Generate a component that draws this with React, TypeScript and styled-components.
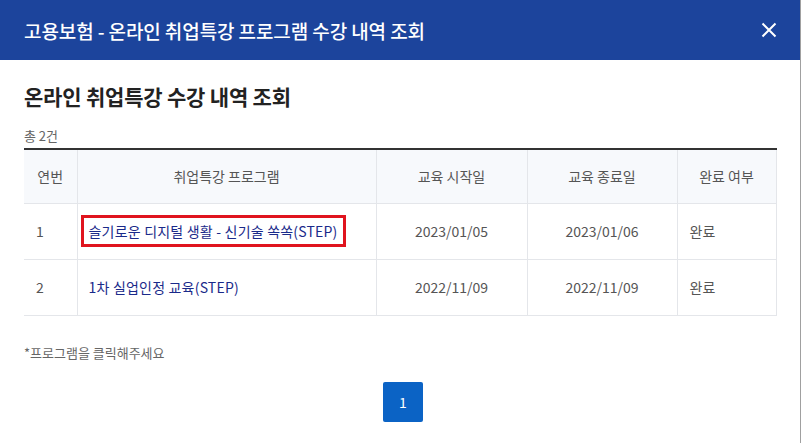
import React from "react";
import styled, { createGlobalStyle } from "styled-components";

const Global = createGlobalStyle`
  html, body { margin: 0; padding: 0; background: #fff; }
  body { font-family: "Noto Sans CJK KR", "Noto Sans", sans-serif; }
  * { box-sizing: border-box; }
`;

const Modal = styled.div`
  width: 801px;
  height: 443px;
  background: #fff;
  border-right: 1px solid #a0a0a0;
  overflow: hidden;
`;

const Header = styled.div`
  height: 60px;
  background: #1c449c;
  display: flex;
  align-items: center;
  justify-content: space-between;
  padding: 0 22px 0 24px;
`;

const HeaderTitle = styled.h1`
  margin: 0;
  color: #fff;
  font-size: 19px;
  font-weight: 500;
  letter-spacing: -0.1px;
`;

const CloseButton = styled.button`
  border: 0;
  background: transparent;
  padding: 0;
  width: 18px;
  height: 18px;
  display: flex;
  align-items: center;
  justify-content: center;
  cursor: pointer;
`;

const Body = styled.div`
  padding: 21px 24px 0 24px;
  width: 800px;
`;

const Heading = styled.h2`
  margin: 0;
  font-size: 21px;
  font-weight: 700;
  color: #222;
  line-height: 30px;
  letter-spacing: -0.2px;
`;

const Count = styled.div`
  margin-top: 16px;
  font-size: 13px;
  color: #666;
  line-height: 18px;
`;

const Table = styled.table`
  margin-top: 3px;
  width: 752px;
  border-collapse: collapse;
  border-top: 2px solid #333;
  table-layout: fixed;
  font-size: 14px;
  color: #555;
`;

const Th = styled.th<{ $w: number }>`
  width: ${(p) => p.$w}px;
  height: 54px;
  background: #f7f9fc;
  font-weight: 400;
  text-align: center;
  border: 1px solid #e4e6ea;
  border-top: 0;
  &:first-child { border-left: 0; }
`;

const Td = styled.td<{ $align?: "left" | "center" }>`
  height: 56px;
  border: 1px solid #e4e6ea;
  text-align: ${(p) => p.$align || "left"};
  padding: 0 12px;
  &:first-child { border-left: 0; }
`;

const ProgramCell = styled(Td)`
  padding: 0 0 0 3px;
`;

const ProgramLink = styled.a<{ $marked?: boolean }>`
  display: inline-block;
  color: #1a2a8a;
  text-decoration: none;
  letter-spacing: 0.2px;
  padding: ${(p) => (p.$marked ? "3px 5px" : "6px 8px")};
  border: ${(p) => (p.$marked ? "3px solid #e0141e" : "0")};
  cursor: pointer;
`;

const Note = styled.p`
  margin: 27px 0 0;
  font-size: 13px;
  color: #666;
`;

const Pagination = styled.div`
  display: flex;
  justify-content: center;
  margin-top: 20px;
  padding-left: 6px;
`;

const PageButton = styled.button`
  width: 40px;
  height: 40px;
  border: 0;
  border-radius: 2px;
  background: #0b63c5;
  color: #fff;
  font-size: 14px;
  font-family: inherit;
  cursor: pointer;
`;

const rows = [
  { no: 1, name: "슬기로운 디지털 생활 - 신기술 쏙쏙(STEP)", start: "2023/01/05", end: "2023/01/06", done: "완료", marked: true },
  { no: 2, name: "1차 실업인정 교육(STEP)", start: "2022/11/09", end: "2022/11/09", done: "완료", marked: false },
];

export default function App() {
  return (
    <Modal>
      <Global />
      <Header>
        <HeaderTitle>고용보험 - 온라인 취업특강 프로그램 수강 내역 조회</HeaderTitle>
        <CloseButton aria-label="닫기">
          <svg width="16" height="16" viewBox="0 0 16 16">
            <path d="M1.5 1.5 L14.5 14.5 M14.5 1.5 L1.5 14.5" stroke="#fff" strokeWidth="2" />
          </svg>
        </CloseButton>
      </Header>
      <Body>
        <Heading>온라인 취업특강 수강 내역 조회</Heading>
        <Count>총 2건</Count>
        <Table>
          <thead>
            <tr>
              <Th $w={53}>연번</Th>
              <Th $w={299}>취업특강 프로그램</Th>
              <Th $w={151}>교육 시작일</Th>
              <Th $w={150}>교육 종료일</Th>
              <Th $w={99}>완료 여부</Th>
            </tr>
          </thead>
          <tbody>
            {rows.map((r) => (
              <tr key={r.no}>
                <Td>{r.no}</Td>
                <ProgramCell>
                  <ProgramLink $marked={r.marked}>{r.name}</ProgramLink>
                </ProgramCell>
                <Td $align="center">{r.start}</Td>
                <Td $align="center">{r.end}</Td>
                <Td>{r.done}</Td>
              </tr>
            ))}
          </tbody>
        </Table>
        <Note>*프로그램을 클릭해주세요</Note>
        <Pagination>
          <PageButton>1</PageButton>
        </Pagination>
      </Body>
    </Modal>
  );
}
